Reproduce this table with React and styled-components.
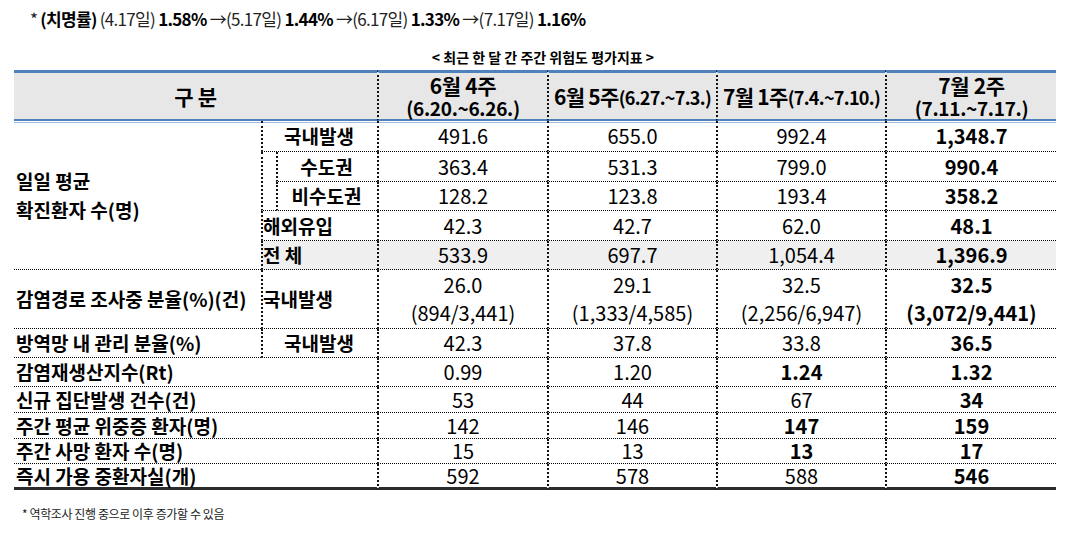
import styled, { createGlobalStyle } from "styled-components";

const GlobalStyle = createGlobalStyle`
  html, body {
    margin: 0;
    padding: 0;
    background: #fff;
  }
  body {
    font-family: "Noto Sans CJK KR", "Noto Sans", sans-serif;
    color: #000;
  }
`;

const H_LINE = "1px dotted #000";
const V_LINE = "2px dotted #111";
const BLUE = "#4f81bd";

const Page = styled.div`
  width: 1080px;
  height: 538px;
  overflow: hidden;
`;

const TopNote = styled.div`
  padding: 8px 0 0 30px;
  font-size: 17px;
  line-height: 22px;
  letter-spacing: -0.7px;
  color: #222;
  white-space: nowrap;
`;

const B = styled.b`
  font-weight: 700;
  color: #000;
`;

const Caption = styled.div`
  margin-top: 17px;
  text-align: center;
  padding-left: 6px;
  font-size: 14px;
  font-weight: 700;
  line-height: 20px;
`;

const Table = styled.table`
  margin: 3px 0 0 14px;
  width: 1042px;
  table-layout: fixed;
  border-collapse: separate;
  border-spacing: 0;
`;

const HeadCell = styled.th`
  height: 46px;
  padding: 0;
  background: #e7e7e7;
  border-top: 3px solid ${BLUE};
  border-bottom: 2px solid ${BLUE};
  border-left: ${(p) => (p.$divider ? V_LINE : "none")};
  box-shadow: 0 1px 0 #fff, 0 2px 0 #a3bbda;
  font-size: 21px;
  font-weight: 700;
  line-height: 22px;
  white-space: nowrap;
  letter-spacing: ${(p) => (p.$inline ? -0.7 : -0.3)}px;
`;

const Dates = styled.span`
  font-size: ${(p) => (p.$inline ? 18 : 19)}px;
`;

const Row = styled.tr`
  height: ${(p) => p.$h}px;
`;

const LabelCell = styled.td`
  padding: 0 2px;
  padding-left: ${(p) => (p.$divider ? 0 : 2)}px;
  border-bottom: ${(p) => (p.$last ? "3px solid #2b2b2b" : H_LINE)};
  border-left: ${(p) => (p.$divider ? V_LINE : "none")};
  background: ${(p) => (p.$gray ? "#efefef" : "transparent")};
  text-align: ${(p) => p.$align || "left"};
  font-size: 19px;
  font-weight: 700;
  line-height: ${(p) => p.$lh || 22}px;
  white-space: nowrap;
  overflow: visible;
`;

const ValueCell = styled.td`
  padding: 0;
  border-bottom: ${(p) => (p.$last ? "3px solid #2b2b2b" : H_LINE)};
  border-left: ${V_LINE};
  background: ${(p) => (p.$gray ? "#efefef" : "transparent")};
  text-align: center;
  font-size: 20px;
  font-weight: ${(p) => (p.$bold ? 700 : 400)};
  line-height: ${(p) => p.$lh || 22}px;
  white-space: nowrap;
`;

const FootNote = styled.div`
  margin: 16px 0 0 22px;
  font-size: 12px;
  line-height: 16px;
  color: #222;
  letter-spacing: -0.4px;
`;

const dailyRows = [
  { key: "domestic", h: 31, values: ["491.6", "655.0", "992.4", "1,348.7"] },
  { key: "capital", h: 30, values: ["363.4", "531.3", "799.0", "990.4"] },
  { key: "noncapital", h: 29, values: ["128.2", "123.8", "193.4", "358.2"] },
  { key: "overseas", h: 30, values: ["42.3", "42.7", "62.0", "48.1"] },
  { key: "total", h: 29, values: ["533.9", "697.7", "1,054.4", "1,396.9"] },
];

const traceValues = [
  ["26.0", "(894/3,441)"],
  ["29.1", "(1,333/4,585)"],
  ["32.5", "(2,256/6,947)"],
  ["32.5", "(3,072/9,441)"],
];

const simpleRows = [
  { label: "감염재생산지수(Rt)", h: 29, values: ["0.99", "1.20", "1.24", "1.32"], bold: [2, 3] },
  { label: "신규 집단발생 건수(건)", h: 26, values: ["53", "44", "67", "34"], bold: [3] },
  { label: "주간 평균 위중증 환자(명)", h: 26, values: ["142", "146", "147", "159"], bold: [2, 3] },
  { label: "주간 사망 환자 수(명)", h: 25, values: ["15", "13", "13", "17"], bold: [2, 3] },
  { label: "즉시 가용 중환자실(개)", h: 26, values: ["592", "578", "588", "546"], bold: [3] },
];

const Values = ({ values, gray, bold = [3], last }) =>
  values.map((v, i) => (
    <ValueCell key={i} $bold={bold.includes(i)} $gray={gray} $last={last}>
      {v}
    </ValueCell>
  ));

export default function App() {
  const [domestic, capital, noncapital, overseas, total] = dailyRows;

  return (
    <Page>
      <GlobalStyle />
      <TopNote>
        * <B>(치명률)</B> (4.17일) <B>1.58%</B> →(5.17일) <B>1.44%</B> →(6.17일){" "}
        <B>1.33%</B> →(7.17일) <B>1.16%</B>
      </TopNote>
      <Caption>&lt; 최근 한 달 간 주간 위험도 평가지표 &gt;</Caption>

      <Table>
        <colgroup>
          <col style={{ width: 247 }} />
          <col style={{ width: 15 }} />
          <col style={{ width: 101 }} />
          <col style={{ width: 170 }} />
          <col style={{ width: 169 }} />
          <col style={{ width: 169 }} />
          <col style={{ width: 171 }} />
        </colgroup>
        <thead>
          <tr>
            <HeadCell colSpan={3}>구 분</HeadCell>
            <HeadCell $divider>
              6월 4주
              <br />
              <Dates>(6.20.~6.26.)</Dates>
            </HeadCell>
            <HeadCell $divider $inline>
              6월 5주<Dates $inline>(6.27.~7.3.)</Dates>
            </HeadCell>
            <HeadCell $divider $inline>
              7월 1주<Dates $inline>(7.4.~7.10.)</Dates>
            </HeadCell>
            <HeadCell $divider>
              7월 2주
              <br />
              <Dates>(7.11.~7.17.)</Dates>
            </HeadCell>
          </tr>
        </thead>
        <tbody>
          <Row $h={domestic.h}>
            <LabelCell rowSpan={5} $lh={29}>
              일일 평균
              <br />
              확진환자 수(명)
            </LabelCell>
            <LabelCell colSpan={2} $divider $align="center">
              국내발생
            </LabelCell>
            <Values values={domestic.values} />
          </Row>
          <Row $h={capital.h}>
            <LabelCell rowSpan={2} $divider />
            <LabelCell $divider $align="center">
              수도권
            </LabelCell>
            <Values values={capital.values} />
          </Row>
          <Row $h={noncapital.h}>
            <LabelCell $divider $align="center">
              비수도권
            </LabelCell>
            <Values values={noncapital.values} />
          </Row>
          <Row $h={overseas.h}>
            <LabelCell colSpan={2} $divider>
              해외유입
            </LabelCell>
            <Values values={overseas.values} />
          </Row>
          <Row $h={total.h}>
            <LabelCell colSpan={2} $divider $gray>
              전 체
            </LabelCell>
            <Values values={total.values} gray />
          </Row>

          <Row $h={59}>
            <LabelCell>감염경로 조사중 분율(%)(건)</LabelCell>
            <LabelCell colSpan={2} $divider>
              국내발생
            </LabelCell>
            {traceValues.map(([pct, count], i) => (
              <ValueCell key={i} $bold={i === 3} $lh={28}>
                {pct}
                <br />
                {count}
              </ValueCell>
            ))}
          </Row>

          <Row $h={29}>
            <LabelCell>방역망 내 관리 분율(%)</LabelCell>
            <LabelCell colSpan={2} $divider $align="center">
              국내발생
            </LabelCell>
            <Values values={["42.3", "37.8", "33.8", "36.5"]} />
          </Row>

          {simpleRows.map((r, i) => {
            const last = i === simpleRows.length - 1;
            return (
              <Row key={r.label} $h={r.h}>
                <LabelCell colSpan={3} $last={last}>
                  {r.label}
                </LabelCell>
                <Values values={r.values} bold={r.bold} last={last} />
              </Row>
            );
          })}
        </tbody>
      </Table>

      <FootNote>* 역학조사 진행 중으로 이후 증가할 수 있음</FootNote>
    </Page>
  );
}
